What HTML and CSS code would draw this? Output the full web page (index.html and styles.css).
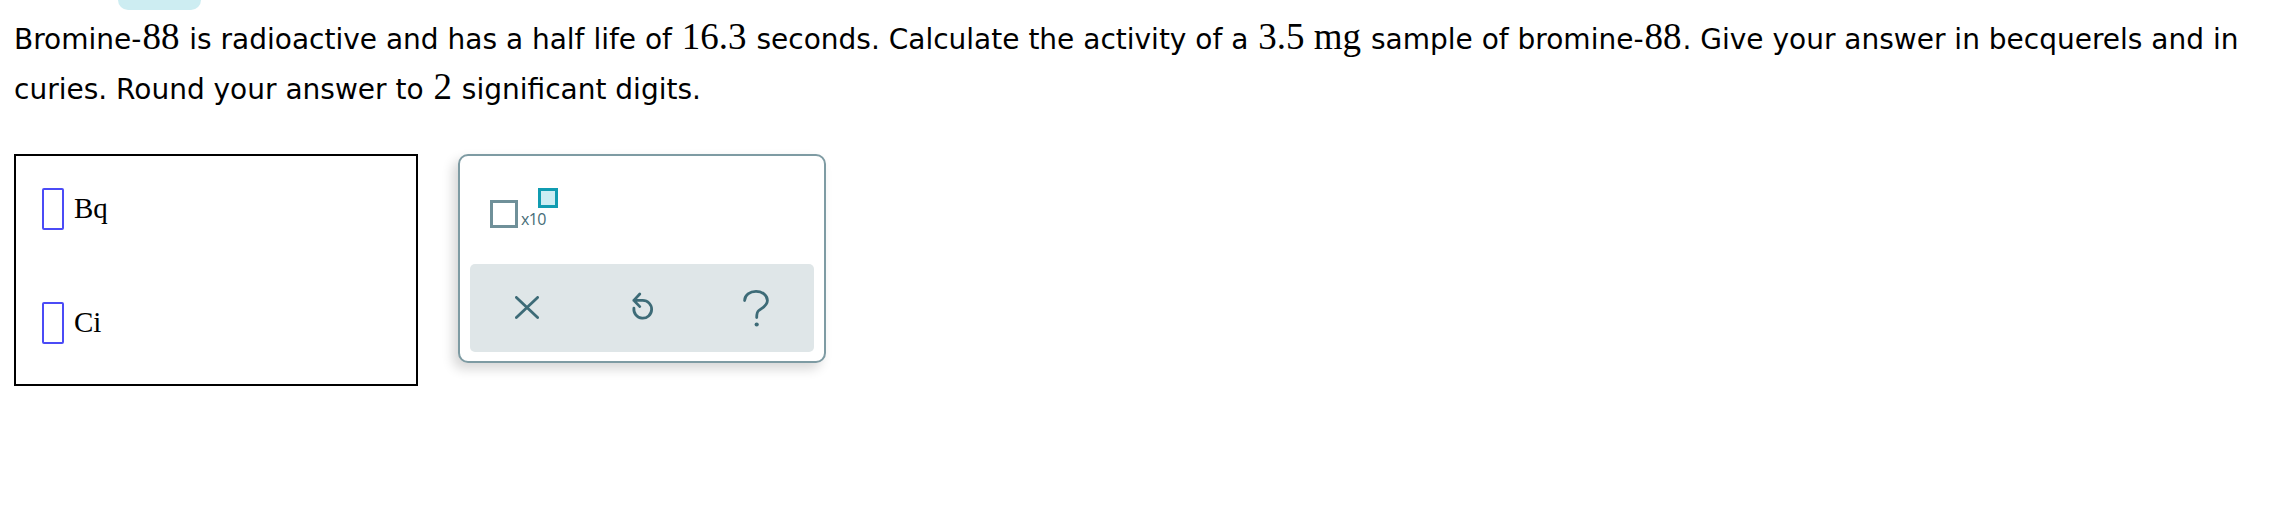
FILE: index.html
```html
<!DOCTYPE html>
<html>
<head>
<meta charset="utf-8">
<link rel="stylesheet" href="styles.css">
</head>
<body>
<div class="tab"></div>
<p class="question">Bromine-<span class="num">88</span> is radioactive and has a half life of <span class="num">16.3</span> seconds. Calculate the activity of a <span class="num">3.5 mg</span> sample of bromine-<span class="num">88</span>. Give your answer in becquerels and in <span class="word">curies.</span> Round your answer to <span class="num">2</span> significant digits.</p>
<div class="work">
  <div class="answer">
    <div class="row"><span class="slot"></span><span class="unit">Bq</span></div>
    <div class="row"><span class="slot"></span><span class="unit">Ci</span></div>
  </div>
  <div class="palette">
    <div class="palette-top">
      <div class="sci">
        <span class="base"></span>
        <span class="times">x10</span>
        <span class="exp"></span>
      </div>
    </div>
    <div class="tools">
      <span class="tool">
        <svg width="24" height="24" viewBox="0 0 24 24"><path d="M1.4 1.4 L22.6 21.6 M22.6 1.4 L1.4 21.6" /></svg>
      </span>
      <span class="tool">
        <svg width="26" height="33" viewBox="0 0 26 33"><path d="M10.8 2 L4.8 8.4 L10.8 14.6 M4.8 8.4 H13.7 A8.9 8.9 0 1 1 4.9 16.2" /></svg>
      </span>
      <span class="tool">
        <svg width="32" height="42" viewBox="0 0 32 42"><path d="M3.6 13.5 C3.6 8 9 4.35 15 4.35 C21 4.35 26.4 8 26.4 13.5 C26.4 19 21 21 17.8 23.5 C16.1 24.8 15.7 26 15.7 30.5" /><circle cx="15.7" cy="37.5" r="2.1" class="dot" /></svg>
      </span>
    </div>
  </div>
</div>
</body>
</html>
```
FILE: styles.css
```css
html, body {
  margin: 0;
  padding: 0;
  background: #ffffff;
}

body {
  width: 2280px;
  font-family: "DejaVu Sans", Verdana, sans-serif;
  color: #000;
}

.tab {
  width: 83px;
  height: 10px;
  margin-left: 118px;
  background: #cdedf2;
  border-radius: 0 0 11px 11px;
}

.question {
  margin: 5px 0 0 0;
  padding: 0 14px;
  font-size: 28px;
  line-height: 50px;
}

.num {
  font-family: "Liberation Serif", "Times New Roman", serif;
  font-size: 37px;
  line-height: 1;
  margin: 0 1px;
}

.work {
  display: flex;
  align-items: flex-start;
  gap: 40px;
  margin: 39px 0 0 14px;
}

.answer {
  box-sizing: border-box;
  width: 404px;
  height: 232px;
  border: 2px solid #000;
  padding: 32px 0 0 26px;
  display: flex;
  flex-direction: column;
  gap: 72px;
}

.row {
  display: flex;
  align-items: center;
  gap: 10px;
  height: 42px;
}

.slot {
  box-sizing: border-box;
  width: 22px;
  height: 42px;
  border: 2px solid #4b4bf6;
  border-radius: 2px;
}

.unit {
  font-family: "Liberation Serif", "Times New Roman", serif;
  font-size: 29px;
  line-height: 1.15;
}

.palette {
  box-sizing: border-box;
  width: 368px;
  height: 209px;
  border: 2px solid #7e9ba3;
  border-radius: 10px;
  padding: 0 10px 9px;
  background: #fff;
  box-shadow: -5px 6px 12px rgba(0, 0, 0, 0.16);
  display: flex;
  flex-direction: column;
}

.palette-top {
  box-sizing: border-box;
  height: 108px;
  padding: 44px 0 0 20px;
}

.sci {
  position: relative;
  display: inline-flex;
  align-items: flex-end;
}

.base {
  box-sizing: border-box;
  width: 28px;
  height: 28px;
  border: 3px solid #6f9099;
}

.times {
  font-family: "Open Sans", "Lato", sans-serif;
  font-size: 16px;
  line-height: 1;
  color: #466c77;
  letter-spacing: -0.6px;
  margin: 0 0 1.5px 3px;
}

.exp {
  position: absolute;
  left: 48px;
  top: -12px;
  box-sizing: border-box;
  width: 20px;
  height: 20px;
  border: 3px solid #109cb1;
  background: #ccedf3;
}

.tools {
  flex: 1;
  display: grid;
  grid-template-columns: repeat(3, 1fr);
  align-items: center;
  justify-items: center;
  background: #dfe6e8;
  border-radius: 5px;
}

.tool {
  display: flex;
}

.tool svg path {
  fill: none;
  stroke: #3d6b77;
  stroke-width: 2.8;
  stroke-linecap: round;
  stroke-linejoin: round;
}

.tool svg .dot {
  fill: #3d6b77;
}
```
